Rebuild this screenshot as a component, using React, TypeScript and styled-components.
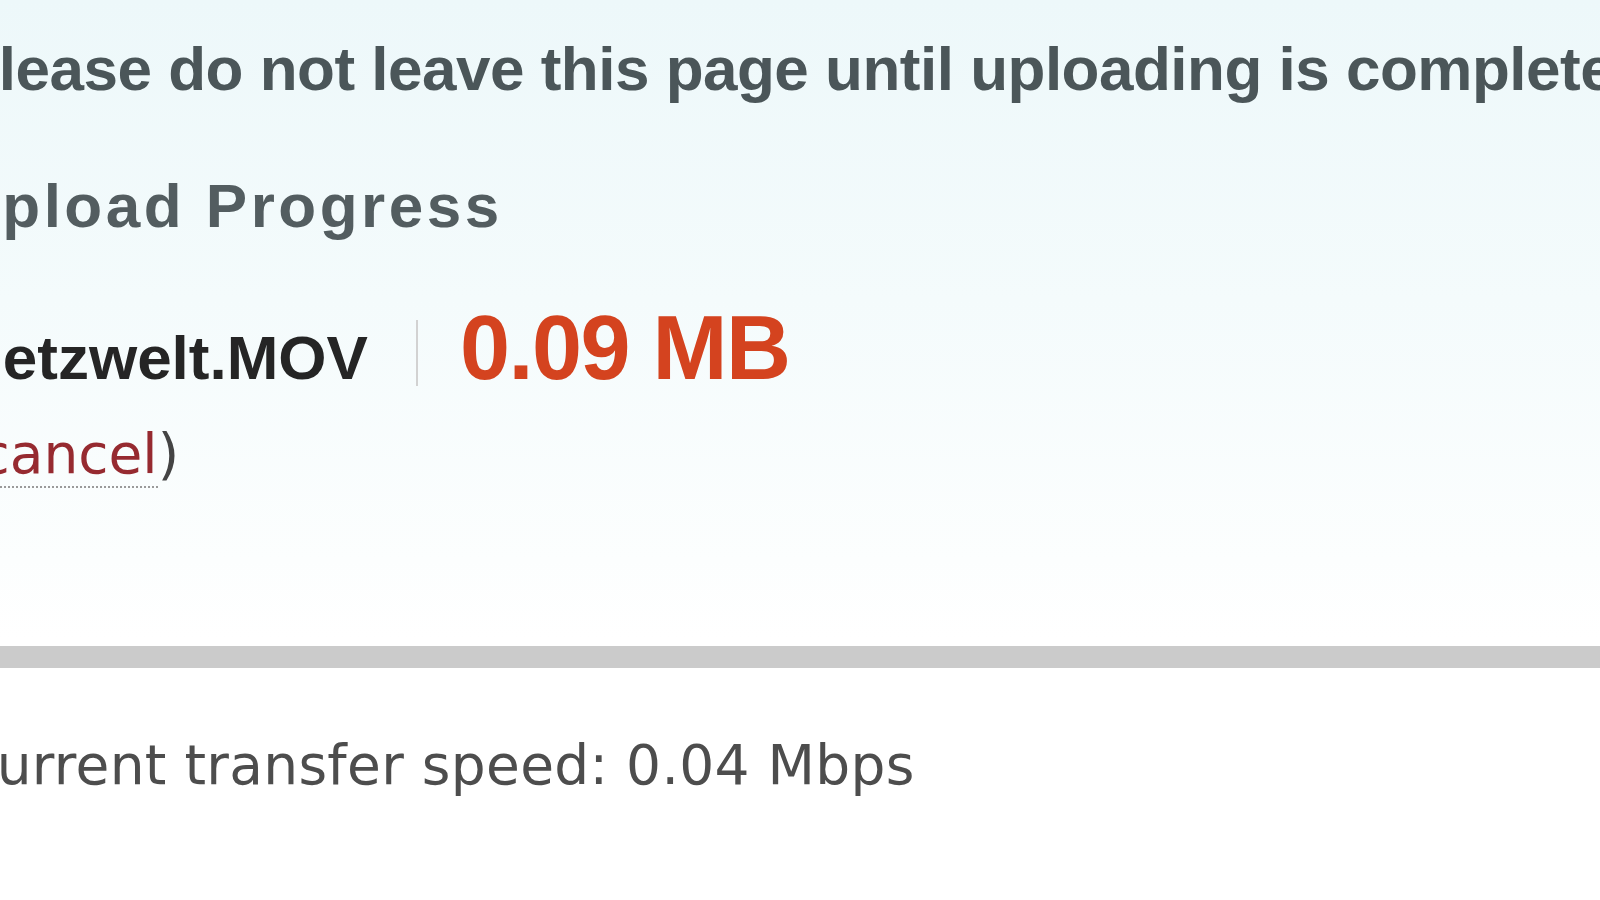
import React from "react";
import styled, { createGlobalStyle } from "styled-components";

const GlobalStyle = createGlobalStyle`
  html, body {
    margin: 0;
    padding: 0;
    height: 100%;
    overflow: hidden;
  }
  body {
    background: linear-gradient(to bottom, #edf8fa 0px, #f4fbfc 300px, #fcfefe 560px, #ffffff 640px);
  }
`;

const Page = styled("div")`
  width: 1600px;
  height: 900px;
  overflow: hidden;
`;

const Content = styled("div")`
  margin-left: -42px;
  padding-top: 38px;
  display: flex;
  flex-flow: column nowrap;
  white-space: nowrap;
`;

const Notice = styled("p")`
  margin: 0;
  font-family: "Liberation Sans", Arial, sans-serif;
  font-weight: 700;
  font-size: 62px;
  line-height: 62px;
  letter-spacing: -0.5px;
  color: #4b5659;
`;

const Heading = styled("h2")`
  margin: 75px 0 0 -4px;
  font-family: "Liberation Sans", Arial, sans-serif;
  font-weight: 700;
  font-size: 62px;
  line-height: 62px;
  letter-spacing: 3.5px;
  color: #535d60;
`;

const FileRow = styled("div")`
  margin-top: 83px;
  display: flex;
  flex-flow: row nowrap;
  align-items: baseline;
`;

const FileName = styled("span")`
  font-family: "Liberation Sans", Arial, sans-serif;
  font-weight: 700;
  font-size: 62px;
  line-height: 62px;
  color: #252525;
`;

const Size = styled("span")`
  margin-left: 48px;
  padding-left: 42px;
  padding-bottom: 10px;
  border-left: 2px solid #d2d2d2;
  font-family: "Liberation Sans", Arial, sans-serif;
  font-weight: 700;
  font-size: 90px;
  line-height: 56px;
  letter-spacing: -1.5px;
  color: #d4431f;
`;

const CancelLine = styled("p")`
  margin: 38px 0 0;
  font-family: "DejaVu Sans", Verdana, sans-serif;
  font-size: 55px;
  line-height: 55px;
  color: #444;
`;

const CancelLink = styled("a")`
  color: #962a30;
  text-decoration: none;
  border-bottom: 2px dotted #9a9a9a;
`;

const ProgressTrack = styled("div")`
  margin-top: 164px;
  height: 22px;
  background: #cbcbcb;
`;

const Speed = styled("p")`
  margin: 70px 0 0;
  font-family: "DejaVu Sans", Verdana, sans-serif;
  font-size: 55px;
  line-height: 55px;
  letter-spacing: 0.3px;
  color: #4d4d4d;
`;

export default function App() {
  return (
    <Page>
      <GlobalStyle />
      <Content>
        <Notice>Please do not leave this page until uploading is complete</Notice>
        <Heading>Upload Progress</Heading>
        <FileRow>
          <FileName>Netzwelt.MOV</FileName>
          <Size>0.09 MB</Size>
        </FileRow>
        <CancelLine>
          (<CancelLink href="#">cancel</CancelLink>)
        </CancelLine>
        <ProgressTrack />
        <Speed>Current transfer speed: 0.04 Mbps</Speed>
      </Content>
    </Page>
  );
}
